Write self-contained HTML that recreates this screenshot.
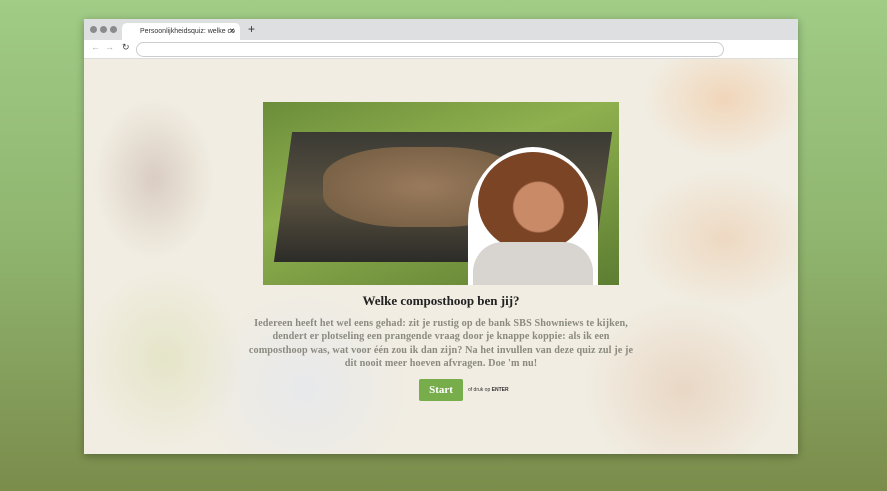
<!DOCTYPE html><html><head><style>
body{margin:0;width:887px;height:491px;overflow:hidden;background:linear-gradient(#a0cc86,#8fb46e 50%,#7b8c4b);font-family:"Liberation Sans",sans-serif}
.win{position:absolute;left:84px;top:19px;width:714px;height:435px;background:#fff;box-shadow:0 2px 8px rgba(0,0,0,.3)}
.tabs{height:21px;background:#dedfe1;position:relative}
.dot{position:absolute;top:7px;width:7px;height:7px;border-radius:50%;background:#8b8b8d}
.tab{position:absolute;left:38px;top:4px;width:118px;height:17px;background:#fff;border-radius:5px 5px 0 0;font-size:7px;color:#333;line-height:17px;padding-left:18px;box-sizing:border-box;white-space:nowrap;overflow:hidden}
.bar{height:18px;position:relative;border-bottom:1px solid #ddd}
.url{position:absolute;left:52px;top:2px;width:586px;height:13px;border:1px solid #ccc;border-radius:8px}
.content{position:absolute;top:40px;left:0;width:714px;height:395px;background:
radial-gradient(ellipse 60px 80px at 70px 120px,rgba(150,110,100,.25),transparent),
radial-gradient(ellipse 80px 60px at 640px 40px,rgba(240,170,110,.35),transparent),
radial-gradient(ellipse 90px 70px at 640px 180px,rgba(230,170,120,.3),transparent),
radial-gradient(ellipse 80px 90px at 80px 300px,rgba(200,210,140,.3),transparent),
radial-gradient(ellipse 100px 90px at 600px 330px,rgba(210,150,110,.25),transparent),
radial-gradient(ellipse 110px 100px at 220px 330px,rgba(225,230,240,.6),transparent),
#f1ede2;overflow:hidden}
.img{position:absolute;left:179px;top:43px;width:356px;height:183px;background:linear-gradient(160deg,#6b8d3a,#8fb04e 40%,#5d7d32);overflow:hidden}
h1{position:absolute;top:234px;left:0;width:714px;text-align:center;font:bold 13px "Liberation Serif",serif;color:#222;margin:0}
p{position:absolute;top:258px;left:162px;width:390px;text-align:center;font:bold 10.2px/13.3px "Liberation Serif",serif;color:#8a8a80;margin:0;letter-spacing:0.1px}
.btn{position:absolute;left:335px;top:320px;width:44px;height:22px;background:#78ad4b;color:#fff;font:bold 11px "Liberation Serif",serif;text-align:center;line-height:22px;border-radius:2px}
.hint{position:absolute;left:384px;top:328px;font-size:5px;color:#333}
</style></head><body>
<div class="win">
<div class="tabs"><div class="dot" style="left:6px"></div><div class="dot" style="left:16px"></div><div class="dot" style="left:26px"></div>
<div class="tab">Persoonlijkheidsquiz: welke co <span style="position:absolute;right:5px">✕</span></div>
<div style="position:absolute;left:164px;top:3px;font-size:12px;color:#333">+</div></div>
<div class="bar"><span style="position:absolute;left:7px;top:2px;font-size:9px;color:#aaa">← &nbsp;→</span><span style="position:absolute;left:38px;top:2px;font-size:9px;color:#444">↻</span><div class="url"></div></div>
<div class="content">
<div class="img">
<div style="position:absolute;left:20px;top:30px;width:320px;height:130px;background:linear-gradient(#3a3a34,#5a5140 50%,#2c2c28);transform:skewX(-8deg)"></div>
<div style="position:absolute;left:60px;top:45px;width:200px;height:80px;background:radial-gradient(#9a7a5c,#6f5a40);border-radius:40%"></div>
<div style="position:absolute;left:205px;top:45px;width:130px;height:150px;background:#fff;border-radius:50% 50% 10px 10px"></div>
<div style="position:absolute;left:215px;top:50px;width:110px;height:100px;background:radial-gradient(circle at 55% 55%,#c98a68 30%,#7a4425 32%);border-radius:50%"></div>
<div style="position:absolute;left:210px;top:140px;width:120px;height:50px;background:#d8d4cf;border-radius:30px 30px 0 0"></div>
</div>
<h1>Welke composthoop ben jij?</h1>
<p>Iedereen heeft het wel eens gehad: zit je rustig op de bank SBS Showniews te kijken,<br>dendert er plotseling een prangende vraag door je knappe koppie: als ik een<br>composthoop was, wat voor één zou ik dan zijn? Na het invullen van deze quiz zul je je<br>dit nooit meer hoeven afvragen. Doe 'm nu!</p>
<div class="btn">Start</div><div class="hint">of druk op <b>ENTER</b></div>
</div></div>
</body></html>
